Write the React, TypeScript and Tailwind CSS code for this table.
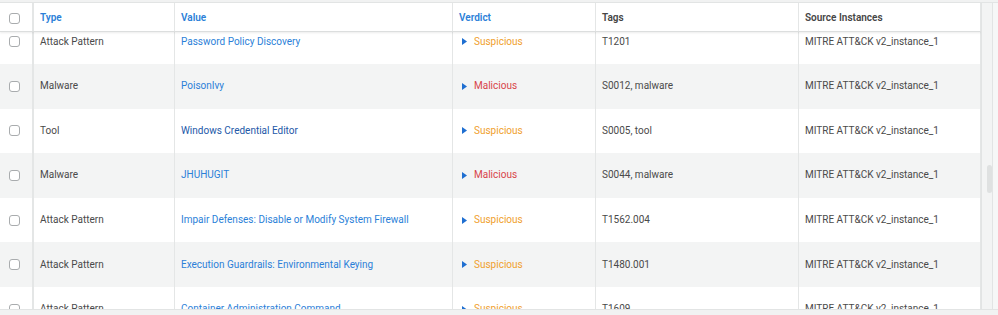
import React from "react";

type Row = { type: string; value: string; verdict: "Suspicious" | "Malicious"; tags: string; dark?: boolean };

const rows: Row[] = [
  { type: "Attack Pattern", value: "Password Policy Discovery", verdict: "Suspicious", tags: "T1201" },
  { type: "Malware", value: "PoisonIvy", verdict: "Malicious", tags: "S0012, malware" },
  { type: "Tool", value: "Windows Credential Editor", verdict: "Suspicious", tags: "S0005, tool", dark: true },
  { type: "Malware", value: "JHUHUGIT", verdict: "Malicious", tags: "S0044, malware" },
  { type: "Attack Pattern", value: "Impair Defenses: Disable or Modify System Firewall", verdict: "Suspicious", tags: "T1562.004" },
  { type: "Attack Pattern", value: "Execution Guardrails: Environmental Keying", verdict: "Suspicious", tags: "T1480.001" },
  { type: "Attack Pattern", value: "Container Administration Command", verdict: "Suspicious", tags: "T1609" },
];

const cols = "grid grid-cols-[34px_141px_278px_143px_203px_182px]";

function Box() {
  return <div className="w-[11px] h-[11px] rounded-[3px] border border-[#a9acae] bg-white" />;
}

function Tri() {
  return (
    <svg width="5" height="7" viewBox="0 0 5 7" className="shrink-0">
      <path d="M0 0 L5 3.5 L0 7 Z" fill="#1f6fd1" />
    </svg>
  );
}

export default function App() {
  return (
    <div
      className="w-[998px] h-[315px] bg-[#f1f2f2] overflow-hidden flex flex-col text-[10px] leading-none"
      style={{ fontFamily: "Roboto, 'Noto Sans', sans-serif" }}
    >
      <div className="h-[3px] shrink-0 border-b border-[#e2e4e4] bg-[#f1f2f2]" />
      <div className="flex h-[306px] shrink-0">
        <div className="relative w-[981px] overflow-hidden bg-white">
          <div className="absolute left-0 top-0 z-10 w-[981px] h-[29px] bg-white border-b border-[#dcdede] shadow-[0_1px_2px_rgba(0,0,0,0.08)]">
            <div className={`${cols} h-full`}>
              <div className="border-r-2 border-[#e4e6e6] flex items-center pl-[9px] pt-[3px]">
                <Box />
              </div>
              <div className="border-r border-[#e4e6e6] flex items-center pl-[6px] pt-[2px] font-semibold text-[#2b7fd8]">Type</div>
              <div className="border-r border-[#e4e6e6] flex items-center pl-[6px] pt-[2px] font-semibold text-[#2b7fd8]">Value</div>
              <div className="border-r border-[#e4e6e6] flex items-center pl-[6px] pt-[2px] font-semibold text-[#2b7fd8]">Verdict</div>
              <div className="border-r border-[#e4e6e6] flex items-center pl-[6px] pt-[2px] font-semibold text-[#454545]">Tags</div>
              <div className="border-r border-[#e4e6e6] flex items-center pl-[6px] pt-[2px] font-semibold text-[#454545]">Source Instances</div>
            </div>
          </div>
          <div className="mt-[16.4px] flex flex-col">
            {rows.map((r, i) => (
              <div key={i} className={`${cols} h-[44.6px] shrink-0 ${i % 2 === 1 ? "bg-[#f3f4f4]" : "bg-white"}`}>
                <div className="border-r-2 border-[#e4e6e6] flex items-center pl-[9px]">
                  <Box />
                </div>
                <div className="border-r border-[#e4e6e6] flex items-center pl-[6px] text-[#4a4a4a]">{r.type}</div>
                <div className={`border-r border-[#e4e6e6] flex items-center pl-[6px] ${r.dark ? "text-[#2358a8]" : "text-[#2b7fd8]"}`}>
                  {r.value}
                </div>
                <div className="border-r border-[#e4e6e6] flex items-center pl-[9px] gap-[7px]">
                  <Tri />
                  <span className={r.verdict === "Suspicious" ? "text-[#f0a02c]" : "text-[#d8444a]"}>{r.verdict}</span>
                </div>
                <div className="border-r border-[#e4e6e6] flex items-center pl-[6px] text-[#4a4a4a]">{r.tags}</div>
                <div className="border-r border-[#e4e6e6] flex items-center pl-[6px] text-[#4a4a4a]">MITRE ATT&amp;CK v2_instance_1</div>
              </div>
            ))}
          </div>
        </div>
        <div className="w-[17px] flex bg-[#f6f7f7]">
          <div className="w-[12px] border-l border-r border-[#e2e4e4] bg-[#f3f4f4] flex flex-col">
            <div className="h-[162px]" />
            <div className="ml-[5px] w-[5px] h-[28px] rounded-full bg-[#dfe1e1]" />
          </div>
        </div>
      </div>
      <div className="flex-1 border-t border-[#e2e4e4] bg-[#f1f2f2]" />
    </div>
  );
}
